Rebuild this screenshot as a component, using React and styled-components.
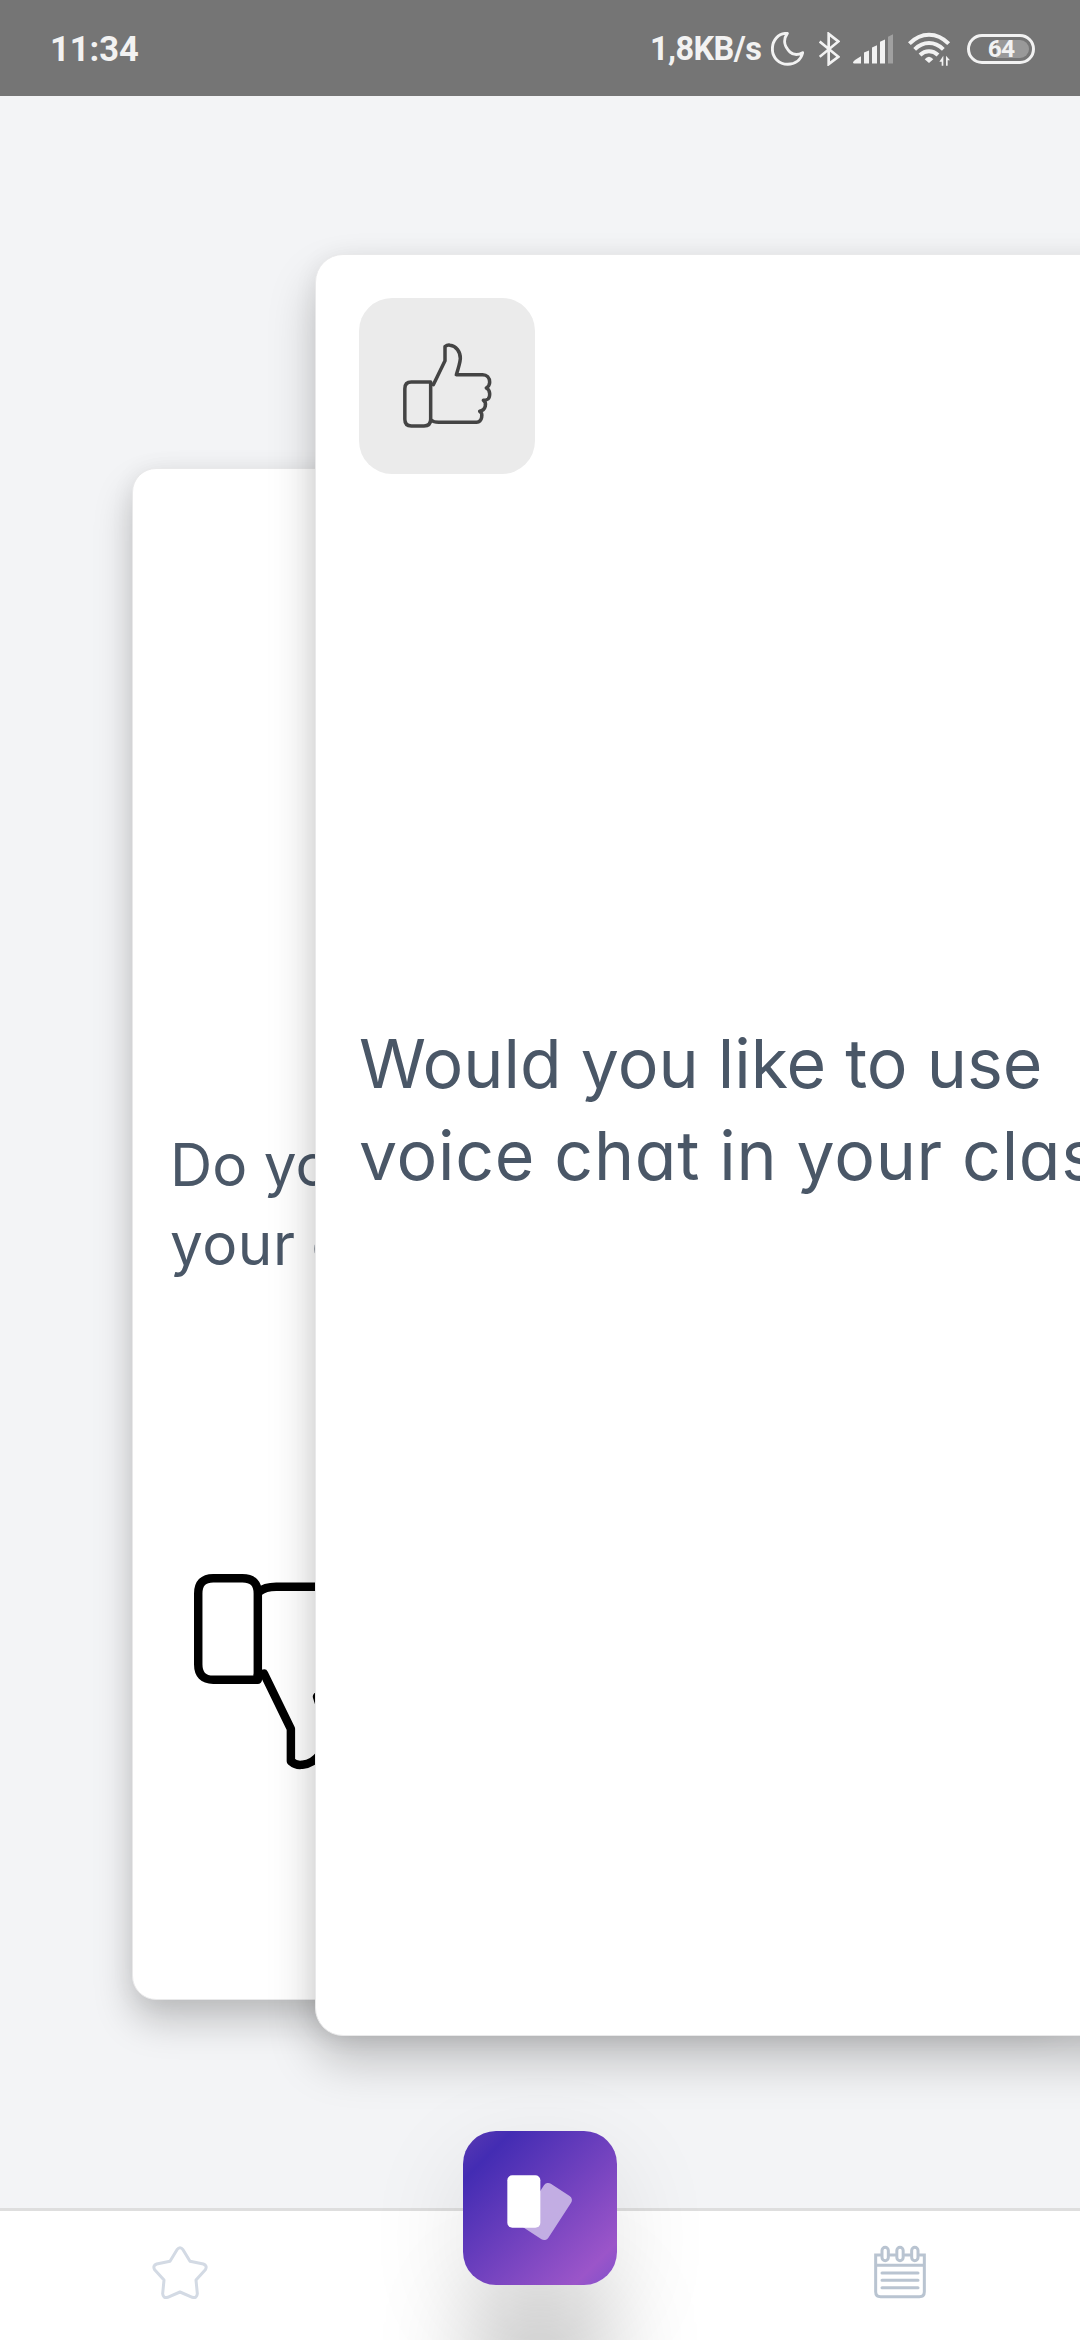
import React from "react";
import styled, { createGlobalStyle } from "styled-components";

const GlobalStyle = createGlobalStyle`
  * { box-sizing: border-box; }
  html, body { margin: 0; padding: 0; }
  body { background: #f3f4f6; overflow: hidden; }
`;

const Screen = styled.div`
  display: flex;
  flex-direction: column;
  width: 1080px;
  height: 2340px;
  overflow: hidden;
  background: #f3f4f6;
  font-family: Inter, "Open Sans", sans-serif;
`;

const StatusBar = styled.header`
  display: flex;
  align-items: center;
  justify-content: space-between;
  flex: none;
  height: 96px;
  padding: 2px 45px 0 50px;
  background: #757575;
  color: #f2f2f2;
  font-family: Roboto, sans-serif;
  font-weight: 700;
`;

const Clock = styled.span`
  font-size: 34.5px;
  line-height: 40px;
`;

const StatusIcons = styled.div`
  display: flex;
  align-items: center;
  svg { display: block; flex: none; }
`;

const Speed = styled.span`
  width: 119px;
  font-size: 32.5px;
  line-height: 40px;
  letter-spacing: -0.6px;
  white-space: nowrap;
`;

const Battery = styled.span`
  display: grid;
  place-items: center;
  width: 68px;
  height: 30px;
  margin-left: 16px;
  border: 3px solid #f2f2f2;
  border-radius: 15px;
  > * { grid-area: 1 / 1; }
`;

const BatteryFill = styled.span`
  justify-self: end;
  width: 44px;
  height: 18px;
  margin-right: 3px;
  border-radius: 9px;
  background: linear-gradient(90deg, transparent 24%, #999 24%);
`;

const BatteryLevel = styled.span`
  font-size: 24.5px;
  line-height: 24px;
  letter-spacing: -0.8px;
`;

const Stage = styled.main`
  display: grid;
  flex: none;
  height: 2112px;
  grid-template-columns: 1080px;
  align-items: start;
`;

const Card = styled.article`
  display: flex;
  flex-direction: column;
  align-items: flex-start;
  grid-area: 1 / 1;
  z-index: ${(p) => p.$layer};
  width: ${(p) => p.$width}px;
  height: ${(p) => p.$height}px;
  margin: ${(p) => p.$top}px 0 0 ${(p) => p.$left}px;
  padding: ${(p) => p.$pad}px;
  border: 1px solid #e9e9ea;
  border-radius: ${(p) => p.$radius}px;
  background: #fff;
  box-shadow:
    0 ${(p) => p.$depth}px ${(p) => p.$depth * 1.8}px rgba(0, 0, 0, 0.21),
    0 2px 24px rgba(0, 0, 0, 0.06);
`;

const Answer = styled.div`
  display: grid;
  place-items: center;
  width: 176px;
  height: 176px;
  border-radius: 33px;
  background: #ebebeb;
`;

const Question = styled.h1`
  margin: ${(p) => p.$top}px 0 0;
  color: #4a5767;
  font-size: ${(p) => p.$size}px;
  font-weight: 400;
  line-height: ${(p) => p.$line}px;
  font-feature-settings: "cv11" 1;
  white-space: nowrap;
`;

const Line = styled.span`
  display: block;
  letter-spacing: ${(p) => p.$track}px;
  word-spacing: ${(p) => p.$gap}px;
`;

const Thumb = styled.svg`
  display: block;
  width: ${(p) => p.$size}px;
  height: ${(p) => p.$size}px;
  margin: ${(p) => p.$margin || "0"};
  transform: ${(p) => (p.$down ? "scaleY(-1)" : "none")};
  overflow: visible;
  fill: none;
  stroke: ${(p) => p.$color};
  stroke-width: ${(p) => p.$stroke};
  stroke-linejoin: round;
  stroke-linecap: round;
`;

const Nav = styled.nav`
  display: grid;
  grid-template-columns: repeat(3, 1fr);
  justify-items: center;
  align-items: start;
  flex: none;
  z-index: 3;
  height: 132px;
  border-top: 3px solid #dedede;
  background: #fff;
`;

const NavItem = styled.div`
  margin-top: 34px;
  svg { display: block; }
`;

const DeckButton = styled.div`
  display: grid;
  place-items: center;
  width: 154px;
  height: 154px;
  margin-top: -80px;
  border-radius: 33px;
  background: linear-gradient(135deg, #5a3ab2 0%, #432cb3 16%, #9b55c9 86%, #8050cb 100%);
  box-shadow:
    0 30px 100px rgba(0, 0, 0, 0.1),
    0 150px 100px -20px rgba(0, 0, 0, 0.26);
`;

function ThumbIcon(props) {
  return (
    <Thumb viewBox="311 338 264 264" {...props}>
      <path d="M394 458H336Q316.500 458 316.500 478V570Q316.500 590 336 590H374Q394 590 394 570Z" />
      <path d="M394 464 402 466 437 394V352Q444 346 452 347.500C470 349 484 368 483 388Q482 402 471 436H550C562 436 571 445 571 459Q571 470 561 476C574 482 573 503 566 509Q561 513 552 513C563 520 560 542 541 546C552 552 549 578 532 579H418Q403 579 395 572" />
    </Thumb>
  );
}

const Moon = () => (
  <svg width="33" height="34" viewBox="423 93 97 100" fill="none" stroke="#f2f2f2" strokeWidth="8.500" strokeLinejoin="round" style={{ marginLeft: 2 }}>
    <path d="M471 97C443 96 427 119 427 143C427 169 447 188 472 188C494 188 511 175 516 154C503 161 489 161 479 152C463 137 457 117 471 97Z" />
  </svg>
);

const Bluetooth = () => (
  <svg width="21" height="34" viewBox="565 93 63 101" fill="none" stroke="#f2f2f2" strokeWidth="8" style={{ marginLeft: 15 }}>
    <path d="M567 121 623 167 594 189V98L623 121 567 167" />
  </svg>
);

const Signal = () => (
  <svg width="40" height="30" viewBox="669 98 120 89" fill="#f2f2f2" style={{ marginLeft: 13 }}>
    <path d="M669 182Q669 178 693 164V186H673Q669 186 669 182Z" />
    <path d="M702 153 717 147V186H702Z" />
    <path d="M726 138 741 131V186H726Z" />
    <path d="M750 121 765 114V186H750Z" />
    <path d="M774 106 789 98V186H774Z" fill="#a0a0a0" />
  </svg>
);

const Wifi = () => (
  <svg width="43" height="34" viewBox="837 97 129 102" fill="none" stroke="#f2f2f2" strokeWidth="12" style={{ marginLeft: 15 }}>
    <path d="M841 132C876 96 924 96 959 132" />
    <path d="M857 149C883 124 917 124 943 149" />
    <path d="M873 166C889 151 911 151 927 166" />
    <path d="M887 179Q900 164 913 179L900 190Z" fill="#f2f2f2" stroke="none" />
    <path d="M943 168V198H938V186H931ZM951 198V168L963 182H956V198Z" fill="#f2f2f2" stroke="none" />
  </svg>
);

const Star = () => (
  <svg width="56" height="56" viewBox="156 165 168 168" fill="none" stroke="#d3dae4" strokeWidth="9" strokeLinejoin="round">
    <path d="M231 179Q240 167 249 179L270 214 310 222Q323 227 316 239L288 270 292 311Q291 325 277 322L240 306 203 322Q189 325 188 311L192 270 164 239Q157 227 170 222L210 214Z" />
  </svg>
);

const Calendar = () => (
  <svg width="56" height="56" viewBox="156 165 168 168" fill="none" stroke="#b9c4d1" strokeWidth="9" strokeLinecap="round">
    <path d="M182 195H167V305Q167 320 182 320H298Q313 320 313 305V195H298M209 195H226M254 195H271M167 226H313" />
    <path d="M186 249H294M186 271H294M186 293H294" />
    <rect x="186" y="172" width="19" height="40" rx="9.500" />
    <rect x="230.500" y="172" width="19" height="40" rx="9.500" />
    <rect x="275" y="172" width="19" height="40" rx="9.500" />
  </svg>
);

const Deck = () => (
  <svg width="66.700" height="66.700" viewBox="320 224 200 200">
    <rect x="389" y="256" width="97" height="155" rx="15" fill="#c2ade3" transform="rotate(33 437.500 333.500)" />
    <rect x="321" y="225" width="99" height="157" rx="15" fill="#fff" />
  </svg>
);

export default function App() {
  return (
    <>
      <GlobalStyle />
      <Screen>
        <StatusBar>
          <Clock>11:34</Clock>
          <StatusIcons>
            <Speed>1,8KB/s</Speed>
            <Moon />
            <Bluetooth />
            <Signal />
            <Wifi />
            <Battery>
              <BatteryFill />
              <BatteryLevel>64</BatteryLevel>
            </Battery>
          </StatusIcons>
        </StatusBar>
        <Stage>
          <Card $layer={1} $left={132} $top={372} $width={930} $height={1532} $pad={37} $radius={24} $depth={21}>
            <Question $top={619} $size={58.5} $line={79}>
              <Line $track={0} $gap={0}>Do you</Line>
              <Line $track={0.5} $gap={-1}>your classes</Line>
            </Question>
            <ThumbIcon $size={203} $down $color="#000" $stroke={11} $margin="286px 0 0 24px" />
          </Card>
          <Card $layer={2} $left={315} $top={158} $width={1084} $height={1782} $pad={43} $radius={28} $depth={26}>
            <Answer>
              <ThumbIcon $size={88} $color="#444" $stroke={10.5} />
            </Answer>
            <Question $top={543} $size={68} $line={92}>
              <Line $track={0} $gap={0}>Would you like to use</Line>
              <Line $track={0.7} $gap={-0.6}>voice chat in your classes</Line>
            </Question>
          </Card>
        </Stage>
        <Nav>
          <NavItem>
            <Star />
          </NavItem>
          <DeckButton>
            <Deck />
          </DeckButton>
          <NavItem>
            <Calendar />
          </NavItem>
        </Nav>
      </Screen>
    </>
  );
}
